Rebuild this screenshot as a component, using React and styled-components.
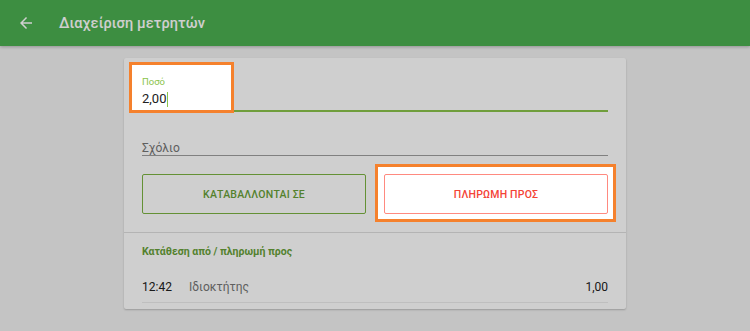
import React from "react";
import styled, { createGlobalStyle } from "styled-components";

const Global = createGlobalStyle`
  html, body { margin: 0; padding: 0; }
  body {
    width: 750px; height: 331px; overflow: hidden;
    background: #f2f2f2;
    font-family: Roboto, "Noto Sans", "Liberation Sans", sans-serif;
  }
`;

const Page = styled.div`
  position: relative;
  width: 750px;
  height: 331px;
  background: #f2f2f2;
`;

const AppBar = styled.header`
  height: 46px;
  background: #4caf50;
  display: flex;
  align-items: center;
  padding-left: 17px;
  gap: 24px;
  box-shadow: 0 1px 3px rgba(0,0,0,0.25);
  color: #fff;
`;

const Title = styled.h1`
  margin: 0;
  font-size: 14.5px;
  font-weight: 500;
  letter-spacing: 0.1px;
`;

const Main = styled.main`
  display: flex;
  justify-content: center;
  padding-top: 12px;
`;

const Card = styled.section`
  width: 502px;
  background: #fff;
  box-shadow: 0 1px 2px rgba(0,0,0,0.22);
  border-radius: 2px;
`;

const FormArea = styled.div`
  padding: 0 18px;
`;

const Field = styled.div`
  display: flex;
  flex-direction: column;
  border-bottom: ${p => (p.$active ? "2px solid #8bc34a" : "1px solid #9e9e9e")};
  padding-top: ${p => p.$top}px;
`;

const Label = styled.span`
  font-size: 9.5px;
  color: #8bc34a;
  line-height: 12px;
  margin-bottom: 2px;
`;

const Value = styled.div`
  font-size: 13px;
  line-height: 18px;
  color: #212121;
  display: flex;
  align-items: center;
  padding-bottom: 2px;
`;

const Caret = styled.span`
  display: inline-block;
  width: 1px;
  height: 15px;
  background: #8bc34a;
  margin-left: 1px;
`;

const Placeholder = styled.div`
  font-size: 12px;
  line-height: 14px;
  color: #757575;
`;

const Buttons = styled.div`
  display: grid;
  grid-template-columns: 1fr 1fr;
  gap: 18px;
  padding: 18px 0 18px;
`;

const OutlineButton = styled.button`
  height: 40px;
  background: #fff;
  border: 1px solid ${p => p.$border};
  border-radius: 2px;
  color: ${p => p.$color};
  font-family: Roboto, "Liberation Sans", sans-serif;
  font-size: 10.5px;
  font-weight: 500;
  letter-spacing: 0.2px;
  cursor: pointer;
`;

const Divider = styled.div`
  height: 1px;
  background: #dedede;
`;

const ListArea = styled.div`
  padding: 0 18px 6px;
`;

const SectionHeader = styled.div`
  font-size: 10.5px;
  font-weight: 700;
  color: #689f38;
  padding: 13px 0 0;
  line-height: 12px;
`;

const Row = styled.div`
  display: flex;
  align-items: center;
  height: 45px;
  padding-top: 14px;
  box-sizing: border-box;
  border-bottom: 1px solid #ececec;
  font-size: 12px;
`;

const Time = styled.span`
  color: #212121;
  width: 47px;
`;

const Name = styled.span`
  color: #757575;
  flex: 1;
`;

const Amount = styled.span`
  color: #212121;
`;

const Overlay = styled.svg`
  position: absolute;
  left: 0;
  top: 0;
  pointer-events: none;
`;

const Spotlight = styled.div`
  position: absolute;
  border: 3px solid #f5812d;
  box-sizing: border-box;
  pointer-events: none;
`;

const spots = [
  { x: 129, y: 62, w: 105, h: 51 },
  { x: 375, y: 164, w: 241, h: 58 },
];

export default function App() {
  const hole = spots
    .map(s => `M${s.x} ${s.y}h${s.w}v${s.h}h${-s.w}z`)
    .join(" ");
  return (
    <Page>
      <Global />
      <AppBar>
        <svg width="18" height="18" viewBox="0 0 24 24" fill="#fff">
          <path d="M20 11H7.83l5.59-5.59L12 4l-8 8 8 8 1.41-1.41L7.83 13H20v-2z" />
        </svg>
        <Title>Διαχείριση μετρητών</Title>
      </AppBar>
      <Main>
        <Card>
          <FormArea>
            <Field $active $top={18}>
              <Label>Ποσό</Label>
              <Value>
                2,00<Caret />
              </Value>
            </Field>
            <Field $top={29}>
              <Placeholder>Σχόλιο</Placeholder>
            </Field>
            <Buttons>
              <OutlineButton $border="#7cb342" $color="#689f38">
                ΚΑΤΑΒΑΛΛΟΝΤΑΙ ΣΕ
              </OutlineButton>
              <OutlineButton $border="#ff8a80" $color="#f44336">
                ΠΛΗΡΩΜΗ ΠΡΟΣ
              </OutlineButton>
            </Buttons>
          </FormArea>
          <Divider />
          <ListArea>
            <SectionHeader>Κατάθεση από / πληρωμή προς</SectionHeader>
            <Row>
              <Time>12:42</Time>
              <Name>Ιδιοκτήτης</Name>
              <Amount>1,00</Amount>
            </Row>
          </ListArea>
        </Card>
      </Main>
      <Overlay width="750" height="331" viewBox="0 0 750 331">
        <path
          fillRule="evenodd"
          fill="rgba(0,0,0,0.19)"
          d={`M0 0h750v331H0z ${hole}`}
        />
      </Overlay>
      {spots.map((s, i) => (
        <Spotlight
          key={i}
          style={{ left: s.x, top: s.y, width: s.w, height: s.h }}
        />
      ))}
    </Page>
  );
}
